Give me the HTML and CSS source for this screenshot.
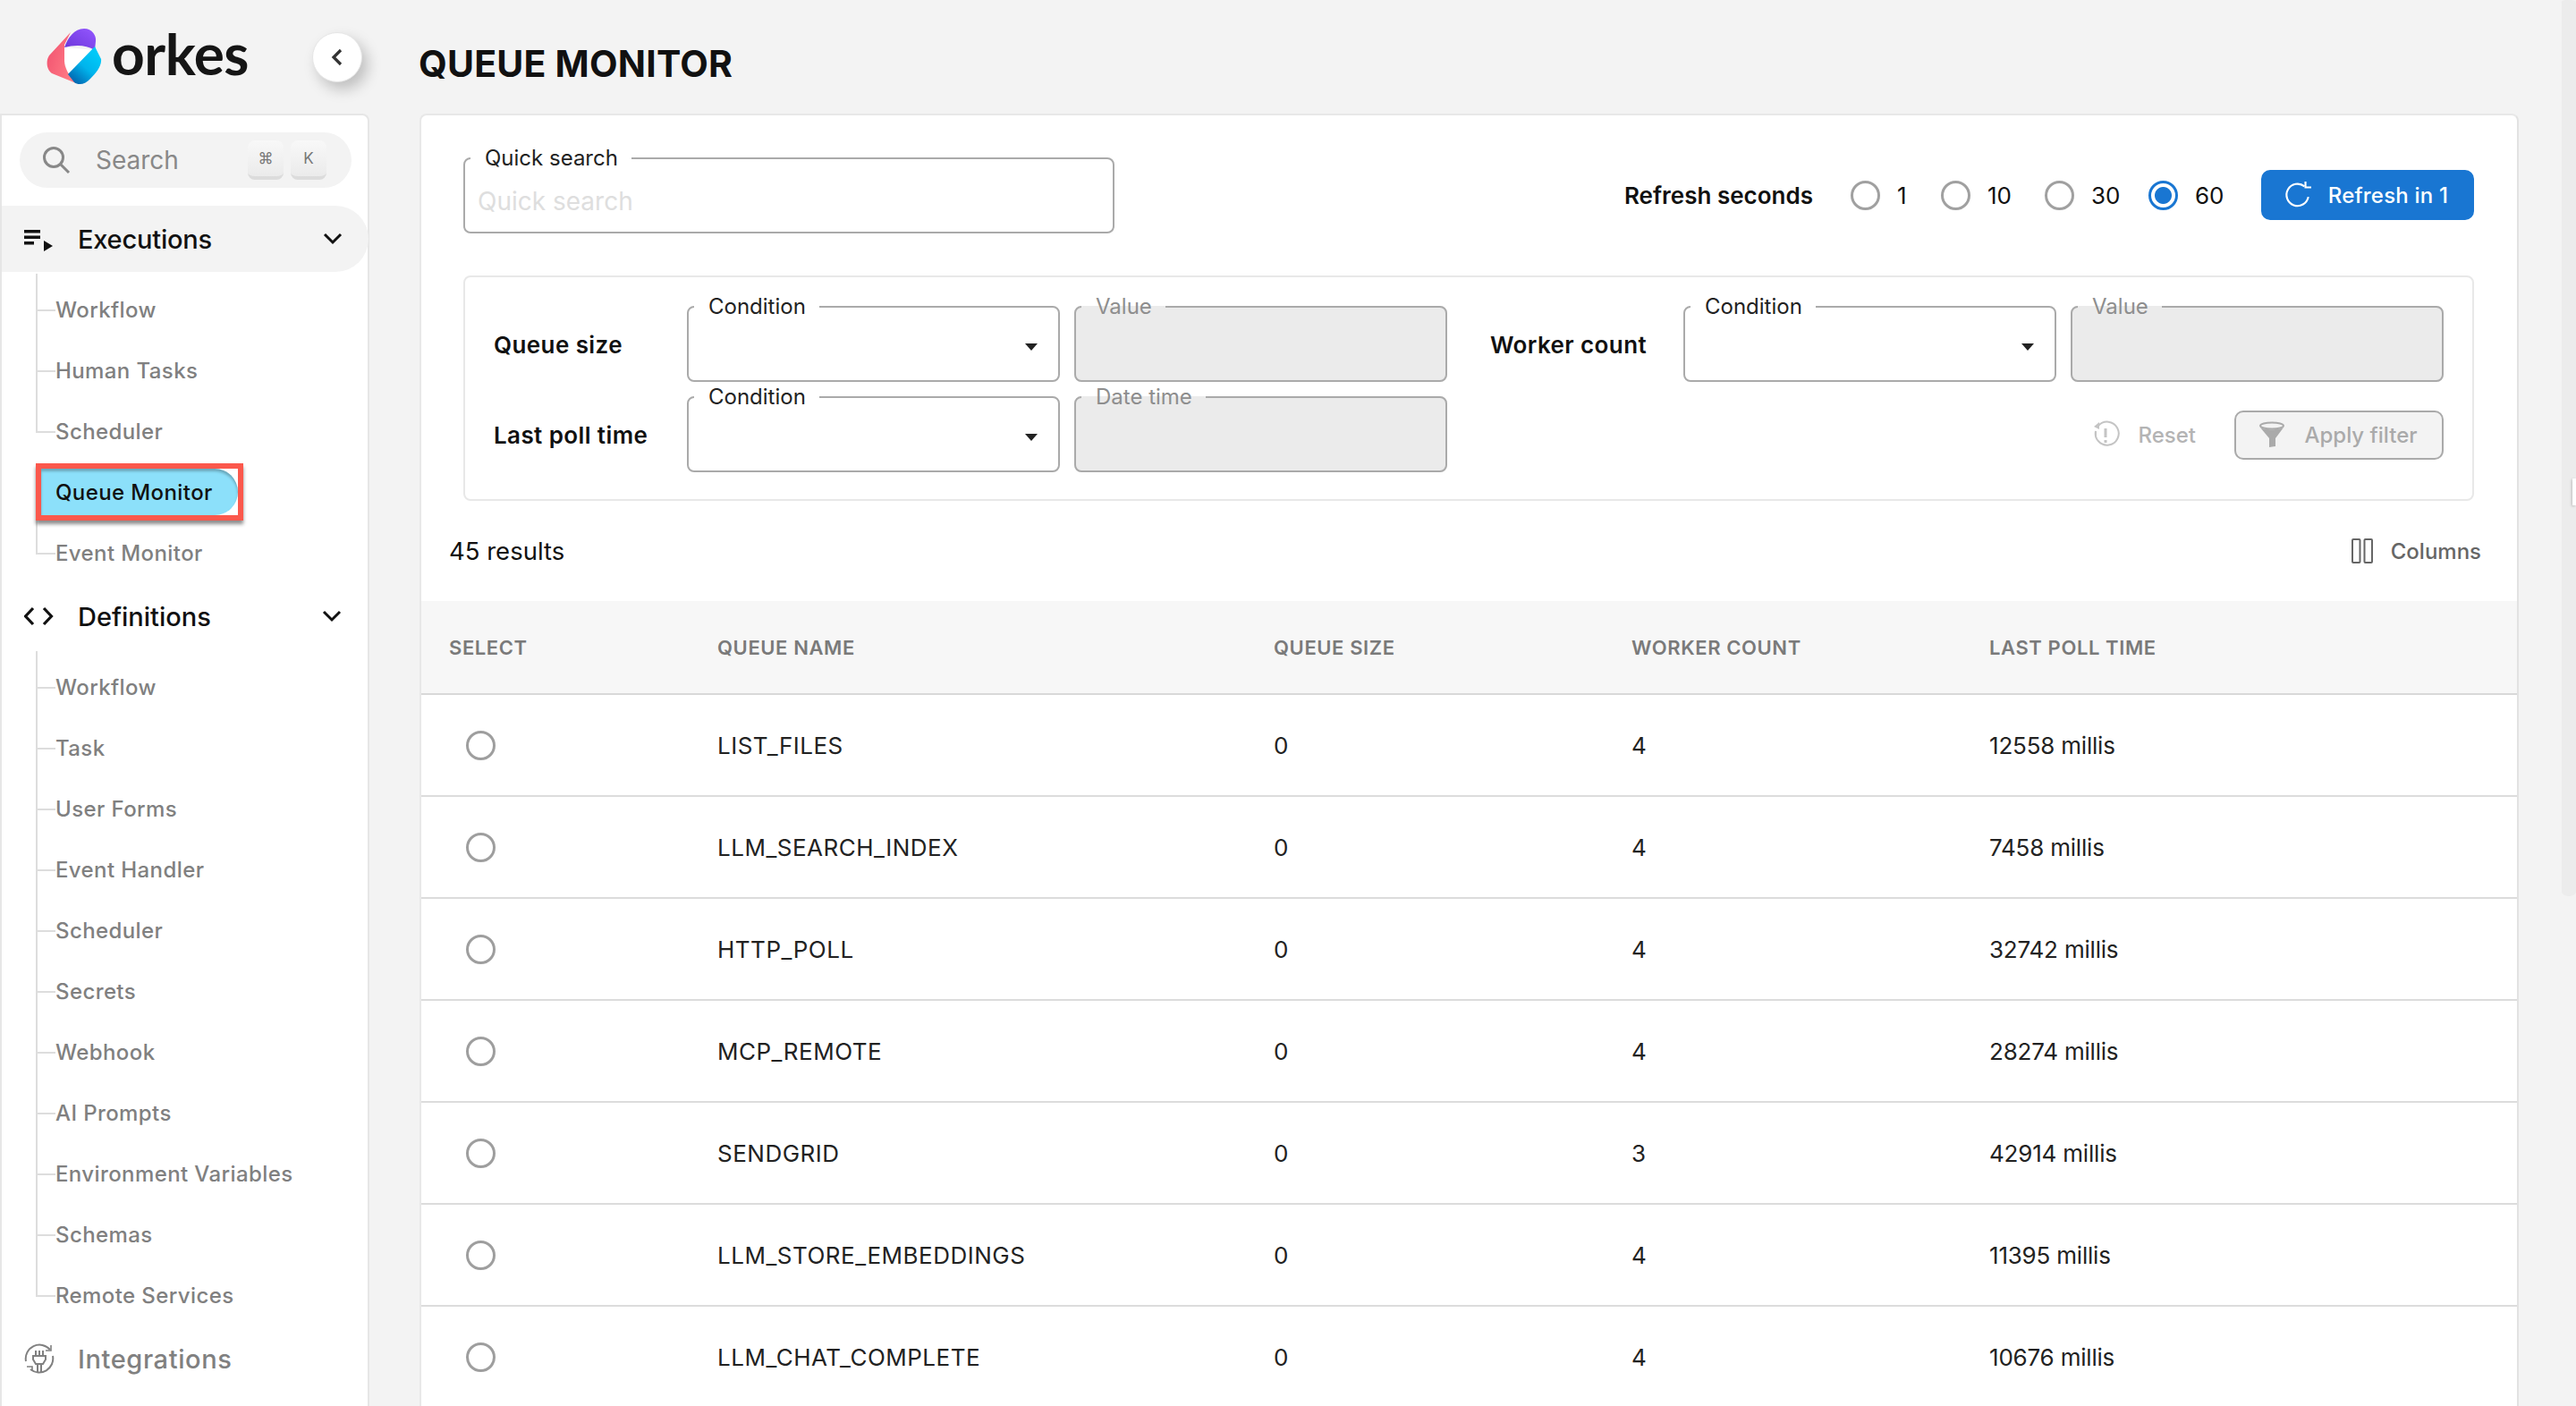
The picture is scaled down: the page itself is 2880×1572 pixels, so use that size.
FILE: index.html
```html
<!DOCTYPE html>
<html lang="en">
<head>
    <meta charset="UTF-8">
    <meta name="viewport" content="width=device-width, initial-scale=1.0">
    <title>Queue Monitor</title>
    <link rel="stylesheet" href="styles.css">
</head>
<body>
    <div class="page">
        <div class="left-col">
            <div class="brand">
                <svg class="brand-mark" width="62" height="63" viewBox="0 0 62 63">
                    <defs>
                        <linearGradient id="pinkGrad" x1="0" y1="0" x2="1" y2="0.5"><stop offset="0" stop-color="#f0506e"/><stop offset="1" stop-color="#ff7a85"/></linearGradient>
                        <linearGradient id="purpleGrad" x1="0" y1="1" x2="1" y2="0"><stop offset="0" stop-color="#6a35d8"/><stop offset="1" stop-color="#9457ff"/></linearGradient>
                        <linearGradient id="blueGrad" x1="0.2" y1="1" x2="0.8" y2="0.2"><stop offset="0" stop-color="#0262ad"/><stop offset="0.55" stop-color="#00b4ec"/><stop offset="1" stop-color="#00c8f8"/></linearGradient>
                    </defs>
                    <path d="M20 21 L54 24 L24 51 L20 36Z" fill="#fff"/>
                    <path d="M27 4 L3 30 C-1 36 0 46 6 50 L33 61 C25 52 20 44 20 36 L20 18Z" fill="url(#pinkGrad)"/>
                    <path d="M20 21 C24 10 31 0 42 0 C51 0 56 8 55 14 L54 24 C44 18 32 18 20 21Z" fill="url(#purpleGrad)"/>
                    <path d="M54 20 L61 34 C62 42 55 50 49 56 C44 62 36 64 31 60 L24 51Z" fill="url(#blueGrad)"/>
                </svg>
                <span class="brand-name">orkes</span>
                <button class="collapse-btn">
                    <svg width="16" height="22" viewBox="0 0 16 22"><path d="M12 3 L4 11 L12 19" fill="none" stroke="#333" stroke-width="3.2"/></svg>
                </button>
            </div>
            <nav class="sidebar">
                <div class="search-box">
                    <svg width="32" height="32" viewBox="0 0 32 32"><circle cx="13" cy="13" r="10.5" fill="none" stroke="#888" stroke-width="3"/><path d="M20 20 L30 30" stroke="#888" stroke-width="3"/></svg>
                    <span class="search-text">Search</span>
                    <span class="key">⌘</span>
                    <span class="key">K</span>
                </div>

                <div class="nav-head open">
                    <svg class="nav-icon" width="34" height="28" viewBox="0 0 34 28"><path d="M0 4h18v3.4H0zM0 10.5h18v3.4H0zM0 17h11v3.4H0z" fill="#111"/><path d="M22 16 L32 22 L22 28Z" fill="#111"/></svg>
                    <span class="nav-label">Executions</span>
                    <svg class="chev" width="22" height="14" viewBox="0 0 22 14"><path d="M2 2 L11 11 L20 2" fill="none" stroke="#111" stroke-width="3"/></svg>
                </div>
                <ul class="sub-list">
                    <li>Workflow</li>
                    <li>Human Tasks</li>
                    <li>Scheduler</li>
                    <li class="active"><span class="pill"><span class="pill-fill">Queue Monitor</span></span></li>
                    <li>Event Monitor</li>
                </ul>

                <div class="nav-head">
                    <svg class="nav-icon" width="34" height="22" viewBox="0 0 34 22"><path d="M10 2 L1.5 11 L10 20M22 2 L30.5 11 L22 20" fill="none" stroke="#111" stroke-width="3.2"/></svg>
                    <span class="nav-label">Definitions</span>
                    <svg class="chev" width="22" height="14" viewBox="0 0 22 14"><path d="M2 2 L11 11 L20 2" fill="none" stroke="#111" stroke-width="3"/></svg>
                </div>
                <ul class="sub-list">
                    <li>Workflow</li>
                    <li>Task</li>
                    <li>User Forms</li>
                    <li>Event Handler</li>
                    <li>Scheduler</li>
                    <li>Secrets</li>
                    <li>Webhook</li>
                    <li>AI Prompts</li>
                    <li>Environment Variables</li>
                    <li>Schemas</li>
                    <li>Remote Services</li>
                </ul>

                <div class="nav-head muted">
                    <svg class="nav-icon" width="34" height="34" viewBox="0 0 34 34" fill="none" stroke="#808080" stroke-width="2"><path d="M2 20 A15.5 15.5 0 0 1 29 7"/><path d="M32 14 A15.5 15.5 0 0 1 7 29"/><path d="M30 2v6h-6M3 26h6v5" stroke-width="1.6"/><path d="M13 8v6M17 8v6M21 8v6M10 14h14v4l-3 5h-8l-3-5z"/><path d="M15 23v9M19 23v9"/></svg>
                    <span class="nav-label">Integrations</span>
                </div>
            </nav>
        </div>

        <main class="content">
            <h1 class="page-title">QUEUE MONITOR</h1>
            <section class="card">
                <div class="top-row">
                    <fieldset class="field search-field">
                        <legend>Quick search</legend>
                        <span class="placeholder">Quick search</span>
                    </fieldset>
                    <div class="refresh">
                        <strong>Refresh seconds</strong>
                        <label class="radio-opt narrow"><span class="radio"></span>1</label>
                        <label class="radio-opt"><span class="radio"></span>10</label>
                        <label class="radio-opt"><span class="radio"></span>30</label>
                        <label class="radio-opt last"><span class="radio checked"></span>60</label>
                        <button class="refresh-btn">
                            <svg width="32" height="32" viewBox="0 0 30 30" fill="none" stroke="#fff" stroke-width="2"><path d="M22 6 A11.5 11.5 0 1 0 26 17"/><path d="M23 1v6h6" stroke-width="2"/></svg>
                            Refresh in 1
                        </button>
                    </div>
                </div>

                <div class="filter-box">
                    <div class="filter-grid">
                        <strong class="filter-label">Queue size</strong>
                        <fieldset class="field"><legend>Condition</legend><span class="caret"></span></fieldset>
                        <fieldset class="field disabled"><legend>Value</legend></fieldset>
                        <strong class="filter-label second">Worker count</strong>
                        <fieldset class="field"><legend>Condition</legend><span class="caret"></span></fieldset>
                        <fieldset class="field disabled"><legend>Value</legend></fieldset>

                        <strong class="filter-label">Last poll time</strong>
                        <fieldset class="field"><legend>Condition</legend><span class="caret"></span></fieldset>
                        <fieldset class="field disabled"><legend>Date time</legend></fieldset>
                        <div class="filter-actions">
                            <span class="reset">
                                <svg width="30" height="32" viewBox="0 0 30 32" fill="none" stroke="#c4c4c4" stroke-width="2"><path d="M6 6 A13 13 0 1 1 3 12 V18"/><path d="M1 7 L7 2 V10Z" fill="#c4c4c4" stroke="none"/><path d="M14 9v10M14 22v3" stroke-width="3"/></svg>
                                Reset
                            </span>
                            <button class="apply-btn">
                                <svg width="32" height="30" viewBox="0 0 32 30"><ellipse cx="16" cy="5" rx="13" ry="3.5" fill="none" stroke="#aaa" stroke-width="2"/><path d="M3 7 C8 10 24 10 29 7 L20 19 V28 L13 29 V19Z" fill="#aaa"/></svg>
                                Apply filter
                            </button>
                        </div>
                    </div>
                </div>

                <div class="results-row">
                    <span>45 results</span>
                    <span class="columns-btn">
                        <svg width="24" height="28" viewBox="0 0 24 28" fill="none" stroke="#666" stroke-width="2"><rect x="1" y="1" width="8.5" height="26" rx="1"/><rect x="14.5" y="1" width="8.5" height="26" rx="1"/></svg>
                        Columns
                    </span>
                </div>

                <div class="table">
                    <div class="tr th">
                        <div>SELECT</div><div>QUEUE NAME</div><div>QUEUE SIZE</div><div>WORKER COUNT</div><div>LAST POLL TIME</div>
                    </div>
                    <div class="tr"><div><span class="radio row-radio"></span></div><div>LIST_FILES</div><div>0</div><div>4</div><div>12558 millis</div></div>
                    <div class="tr"><div><span class="radio row-radio"></span></div><div>LLM_SEARCH_INDEX</div><div>0</div><div>4</div><div>7458 millis</div></div>
                    <div class="tr"><div><span class="radio row-radio"></span></div><div>HTTP_POLL</div><div>0</div><div>4</div><div>32742 millis</div></div>
                    <div class="tr"><div><span class="radio row-radio"></span></div><div>MCP_REMOTE</div><div>0</div><div>4</div><div>28274 millis</div></div>
                    <div class="tr"><div><span class="radio row-radio"></span></div><div>SENDGRID</div><div>0</div><div>3</div><div>42914 millis</div></div>
                    <div class="tr"><div><span class="radio row-radio"></span></div><div>LLM_STORE_EMBEDDINGS</div><div>0</div><div>4</div><div>11395 millis</div></div>
                    <div class="tr"><div><span class="radio row-radio"></span></div><div>LLM_CHAT_COMPLETE</div><div>0</div><div>4</div><div>10676 millis</div></div>
                </div>
            </section>
        </main>
        <div class="scroll-thumb"></div>
        <div class="edge-handle"></div>
    </div>
</body>
</html>
```

FILE: styles.css
```css
* {
    box-sizing: border-box;
}
html, body {
    height: 100%;
}
body {
    margin: 0;
    font-family: Inter, "Open Sans", sans-serif;
    background-color: #f3f3f3;
    color: #111;
    overflow: hidden;
}
.page {
    display: flex;
    height: 1572px;
    overflow: hidden;
    position: relative;
}
.left-col {
    width: 413px;
    flex-shrink: 0;
}
.brand {
    height: 127px;
    display: flex;
    align-items: center;
    padding-left: 52px;
}
.brand-mark {
    margin-right: 11px;
}
.brand-name {
    font-family: Lato, sans-serif;
    font-size: 64px;
    font-weight: 700;
    letter-spacing: -0.5px;
    line-height: 1;
    color: #151515;
    width: 224px;
    margin-top: -8px;
}
.collapse-btn {
    width: 56px;
    height: 56px;
    border-radius: 50%;
    border: 1px solid #e6e6e6;
    background: white;
    box-shadow: 6px 8px 16px rgba(0,0,0,0.22);
    display: flex;
    align-items: center;
    justify-content: center;
    padding: 0;
}
.sidebar {
    height: 1445px;
    background: white;
    border: 2px solid #e6e6e6;
    border-top-right-radius: 8px;
    border-bottom: none;
    padding-top: 19px;
}
.search-box {
    height: 62px;
    margin: 0 18px 0 20px;
    border-radius: 31px;
    background: #f3f3f3;
    display: flex;
    align-items: center;
    padding: 0 28px 0 25px;
    color: #888;
}
.search-text {
    font-size: 28px;
    margin-left: 28px;
    flex: 1;
}
.key {
    width: 40px;
    height: 44px;
    margin-left: 8px;
    border-radius: 8px;
    background: linear-gradient(#f8f8f8, #ebebeb);
    border-bottom: 4px solid #dcdcdc;
    font-size: 17px;
    color: #777;
    display: flex;
    align-items: center;
    justify-content: center;
}
.nav-head {
    height: 74px;
    display: flex;
    align-items: center;
    padding: 0 30px 0 25px;
    position: relative;
}
.nav-head.open {
    margin-top: 20px;
    background: #f3f3f3;
    border-radius: 0 37px 37px 0;
    margin-right: -1px;
}
.nav-icon {
    flex-shrink: 0;
}
.nav-label {
    position: absolute;
    left: 85px;
    font-size: 29px;
    font-weight: 500;
}
.chev {
    margin-left: auto;
    margin-right: -1px;
}
.nav-head.open .nav-label {
    letter-spacing: -0.2px;
}
.nav-head.muted {
    color: #808080;
}
.nav-head.muted .nav-label {
    letter-spacing: 0.6px;
}
.sub-list {
    list-style: none;
    margin: 0;
    padding: 8px 0 0 38px;
    position: relative;
}
.sub-list li {
    height: 68px;
    display: flex;
    align-items: center;
    padding-left: 22px;
    font-size: 24px;
    font-weight: 500;
    letter-spacing: 0.4px;
    color: #808080;
    position: relative;
}
.sub-list li::before {
    content: "";
    position: absolute;
    left: 0;
    top: -34px;
    bottom: 32px;
    width: 20px;
    border-left: 2px solid #ddd;
    border-bottom: 2px solid #ddd;
}
.sub-list li:first-child::before {
    top: -6px;
}
.sub-list li.active {
    z-index: 1;
}
.sub-list li.active::before {
    display: none;
}
.pill {
    position: absolute;
    left: 0;
    top: 2px;
    width: 232px;
    height: 64px;
    border: 6px solid #fb584c;
    box-shadow: 0 4px 4px rgba(0,0,0,0.45);
    background: white;
}
.pill-fill {
    height: 100%;
    width: 100%;
    padding-left: 16px;
    display: flex;
    align-items: center;
    color: #111;
    background: #8ce0fa;
    border-radius: 0 30px 30px 0;
    box-shadow: inset 0 3px 3px rgba(0,0,0,0.25);
}
.content {
    width: 2403px;
    flex-shrink: 0;
    padding-left: 56px;
}
.page-title {
    margin: 0;
    height: 127px;
    padding-top: 47px;
    margin-left: -1px;
    font-size: 41px;
    line-height: 48px;
    font-weight: 700;
    letter-spacing: 0.2px;
    color: #111;
}
.card {
    width: 2347px;
    height: 1445px;
    background: white;
    border: 2px solid #e8e8e8;
    border-right-color: #e2e2e2;
    border-bottom: none;
    border-radius: 8px 8px 0 0;
}
.top-row {
    display: flex;
    justify-content: space-between;
    padding: 34px 48px 0 47px;
    height: 179px;
}
fieldset.field {
    margin: 0;
    padding: 0 6px;
    border: 2px solid #aaa;
    border-radius: 8px;
    height: 98px;
    min-width: 0;
    position: relative;
    background: white;
}
fieldset.field legend {
    font-size: 24px;
    line-height: 28px;
    padding: 0 15px 0 16px;
    color: #222;
}
fieldset.field.disabled {
    background: #ebebeb;
}
fieldset.field.disabled legend {
    color: #8e8e8e;
}
.search-field {
    width: 728px;
}
.placeholder {
    font-size: 28px;
    color: #dedede;
    position: absolute;
    left: 14px;
    top: 17px;
}
.refresh {
    display: flex;
    align-items: center;
    height: 56px;
    margin-top: 27px;
    font-size: 26px;
}
.refresh strong {
    font-weight: 600;
    margin-right: 42px;
}
.radio-opt {
    display: flex;
    align-items: center;
    gap: 19px;
    width: 116px;
}
.radio-opt.narrow {
    width: 101px;
}
.radio-opt.last {
    width: 126px;
}
.radio {
    display: inline-block;
    flex-shrink: 0;
    width: 33px;
    height: 33px;
    border-radius: 50%;
    border: 3px solid #a0a0a0;
    background: white;
}
.radio.checked {
    border-color: #1976d2;
    background: radial-gradient(circle, #1976d2 0 9px, white 10px);
}
.refresh-btn {
    width: 238px;
    height: 56px;
    border: none;
    border-radius: 10px;
    background: #1976d2;
    color: white;
    font-family: inherit;
    font-size: 24px;
    font-weight: 500;
    letter-spacing: 0.2px;
    display: flex;
    align-items: center;
    justify-content: center;
    gap: 18px;
    padding: 0 4px 0 0;
}
.filter-box {
    margin: 0 48px 0 47px;
    height: 252px;
    border: 2px solid #e8e8e8;
    border-radius: 8px;
    padding: 19px 32px 0 32px;
}
.filter-grid {
    display: grid;
    grid-template-columns: 216px 433px 433px 248px 433px 417px;
    row-gap: 3px;
    grid-auto-rows: 98px;
}
.filter-grid .field {
    width: 417px;
}
.filter-label {
    display: flex;
    align-items: center;
    padding-top: 14px;
    font-size: 26px;
    font-weight: 600;
    letter-spacing: 0.4px;
}
.filter-label.second {
    padding-left: 32px;
}
.caret {
    position: absolute;
    right: 23px;
    top: 27px;
    width: 0;
    height: 0;
    border-left: 7px solid transparent;
    border-right: 7px solid transparent;
    border-top: 8px solid #222;
}
.filter-actions {
    grid-column: 4 / 7;
    display: flex;
    justify-content: flex-end;
    align-items: center;
    padding-top: 14px;
}
.reset {
    display: flex;
    align-items: center;
    gap: 20px;
    color: #b4b4b4;
    font-size: 24px;
    font-weight: 500;
    margin-right: 43px;
}
.apply-btn {
    width: 234px;
    height: 55px;
    border: 2px solid #aaa;
    border-radius: 10px;
    background: #f3f3f3;
    color: #aaa;
    font-family: inherit;
    font-size: 24px;
    font-weight: 500;
    display: flex;
    align-items: center;
    justify-content: center;
    gap: 20px;
    padding: 0 3px 0 0;
}
.results-row {
    height: 112px;
    display: flex;
    justify-content: space-between;
    align-items: center;
    padding: 0 40px 0 31px;
    font-size: 27.5px;
}
.columns-btn {
    display: flex;
    align-items: center;
    gap: 20px;
    font-size: 24px;
    font-weight: 500;
    color: #666;
}
.tr {
    display: grid;
    grid-template-columns: 300px 622px 400px 400px 1fr;
    height: 114px;
    align-items: center;
    padding-left: 31px;
    border-bottom: 2px solid #dcdcdc;
    font-size: 26px;
    color: #222;
}
.tr > div:nth-child(2) {
    letter-spacing: 0.5px;
}
.tr > div:nth-child(5) {
    letter-spacing: -0.2px;
}
.tr.th {
    height: 105px;
    background: #f7f7f7;
    border-bottom: 2px solid #d8d8d8;
    font-size: 22px;
    font-weight: 600;
    color: #7a7a7a;
}
.tr.th > div {
    letter-spacing: 0.6px;
}
.row-radio {
    display: block;
    margin-left: 19px;
    border-color: #9e9e9e;
}
.scroll-thumb {
    position: absolute;
    top: 0;
    right: 0;
    width: 16px;
    height: 1002px;
    background: #ececec;
    border-radius: 6px 6px 10px 10px / 3px 3px 6px 6px;
}
.edge-handle {
    position: absolute;
    top: 535px;
    right: 0;
    width: 4px;
    height: 30px;
    background: #fff;
    box-shadow: -1px 1px 3px rgba(0,0,0,0.2);
}
```
